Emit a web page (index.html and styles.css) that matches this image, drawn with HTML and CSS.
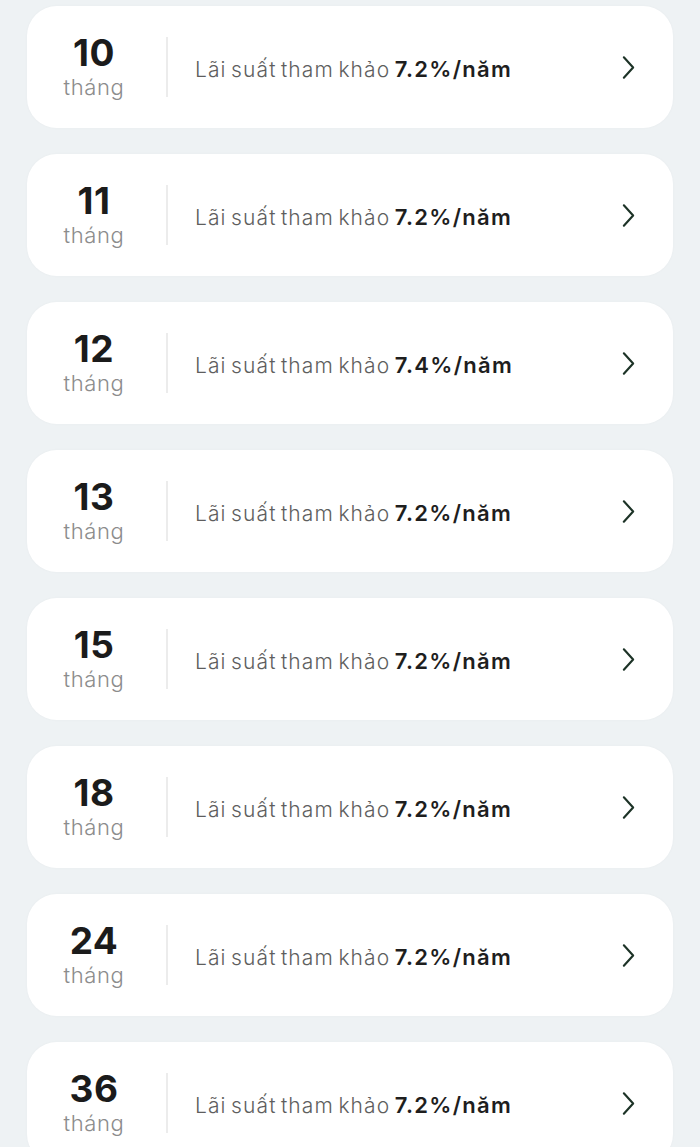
FILE: index.html
```html
<!DOCTYPE html>
<html lang="vi">
<head>
    <meta charset="UTF-8">
    <meta name="viewport" content="width=device-width, initial-scale=1.0">
    <title>Lãi suất tham khảo</title>
    <link rel="stylesheet" href="styles.css">
</head>
<body>

    <!-- Term list -->
    <div class="term-list">
        <div class="term-card">
            <div class="term-period"><span class="term-num">10</span><span class="term-unit">tháng</span></div>
            <div class="term-divider"></div>
            <div class="term-rate">Lãi suất tham khảo <b>7.2%/năm</b></div>
            <svg class="term-arrow" viewBox="0 0 14 26"><path d="M2 2 L12 13 L2 24"/></svg>
        </div>
        <div class="term-card">
            <div class="term-period"><span class="term-num">11</span><span class="term-unit">tháng</span></div>
            <div class="term-divider"></div>
            <div class="term-rate">Lãi suất tham khảo <b>7.2%/năm</b></div>
            <svg class="term-arrow" viewBox="0 0 14 26"><path d="M2 2 L12 13 L2 24"/></svg>
        </div>
        <div class="term-card">
            <div class="term-period"><span class="term-num">12</span><span class="term-unit">tháng</span></div>
            <div class="term-divider"></div>
            <div class="term-rate">Lãi suất tham khảo <b>7.4%/năm</b></div>
            <svg class="term-arrow" viewBox="0 0 14 26"><path d="M2 2 L12 13 L2 24"/></svg>
        </div>
        <div class="term-card">
            <div class="term-period"><span class="term-num">13</span><span class="term-unit">tháng</span></div>
            <div class="term-divider"></div>
            <div class="term-rate">Lãi suất tham khảo <b>7.2%/năm</b></div>
            <svg class="term-arrow" viewBox="0 0 14 26"><path d="M2 2 L12 13 L2 24"/></svg>
        </div>
        <div class="term-card">
            <div class="term-period"><span class="term-num">15</span><span class="term-unit">tháng</span></div>
            <div class="term-divider"></div>
            <div class="term-rate">Lãi suất tham khảo <b>7.2%/năm</b></div>
            <svg class="term-arrow" viewBox="0 0 14 26"><path d="M2 2 L12 13 L2 24"/></svg>
        </div>
        <div class="term-card">
            <div class="term-period"><span class="term-num">18</span><span class="term-unit">tháng</span></div>
            <div class="term-divider"></div>
            <div class="term-rate">Lãi suất tham khảo <b>7.2%/năm</b></div>
            <svg class="term-arrow" viewBox="0 0 14 26"><path d="M2 2 L12 13 L2 24"/></svg>
        </div>
        <div class="term-card">
            <div class="term-period"><span class="term-num">24</span><span class="term-unit">tháng</span></div>
            <div class="term-divider"></div>
            <div class="term-rate">Lãi suất tham khảo <b>7.2%/năm</b></div>
            <svg class="term-arrow" viewBox="0 0 14 26"><path d="M2 2 L12 13 L2 24"/></svg>
        </div>
        <div class="term-card">
            <div class="term-period"><span class="term-num">36</span><span class="term-unit">tháng</span></div>
            <div class="term-divider"></div>
            <div class="term-rate">Lãi suất tham khảo <b>7.2%/năm</b></div>
            <svg class="term-arrow" viewBox="0 0 14 26"><path d="M2 2 L12 13 L2 24"/></svg>
        </div>
    </div>

</body>
</html>
```

FILE: styles.css
```css
/* Page */
body {
    margin: 0;
    background-color: #eef2f4;
    font-family: Inter, "Noto Sans", sans-serif;
    overflow: hidden;
}

/* List of cards */
.term-list {
    display: flex;
    flex-direction: column;
    gap: 26px;
    padding: 6px 27px 0;
}

/* One card */
.term-card {
    height: 122px;
    background: #fff;
    border-radius: 30px;
    display: flex;
    align-items: center;
    box-shadow: 0 0 3px rgba(0, 0, 0, 0.03);
}

/* Left column: months */
.term-period {
    width: 80px;
    margin-left: 27px;
    display: flex;
    flex-direction: column;
    align-items: center;
    padding-top: 0;
}

.term-num {
    font-size: 37px;
    font-weight: 700;
    color: #1b1b1b;
    line-height: 36px;
    letter-spacing: 0.5px;
}

.term-unit {
    font-size: 22px;
    font-weight: 300;
    color: #8c8c8c;
    line-height: 26px;
    margin-top: 3px;
    letter-spacing: 0.6px;
}

/* Divider line */
.term-divider {
    width: 2px;
    height: 60px;
    background: #ececec;
    margin-left: 32px;
}

/* Rate text */
.term-rate {
    flex: 1;
    margin-left: 27px;
    margin-top: 3px;
    font-size: 21px;
    font-weight: 300;
    color: #5e5e5e;
    letter-spacing: 1.1px;
    word-spacing: -2.5px;
}

.term-rate b {
    font-size: 22px;
    font-weight: 600;
    color: #1e1e1e;
    letter-spacing: 1.3px;
    word-spacing: 0;
}

/* Chevron */
.term-arrow {
    width: 13px;
    height: 25px;
    margin-right: 38px;
    fill: none;
    stroke: #1d3327;
    stroke-width: 2.3;
    stroke-linecap: round;
    stroke-linejoin: round;
}
```
